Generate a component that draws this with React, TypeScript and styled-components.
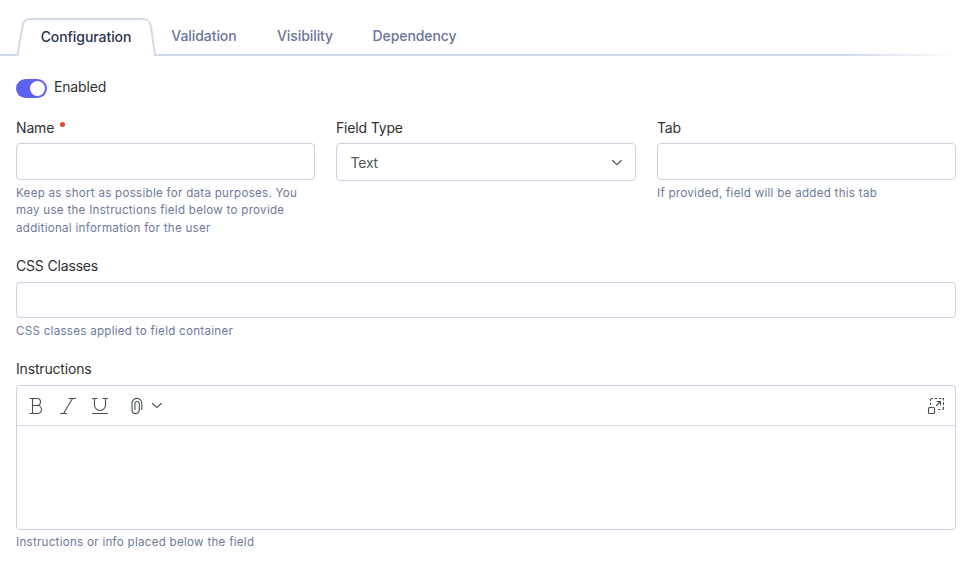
import React from "react";
import styled, { createGlobalStyle } from "styled-components";

const GlobalStyle = createGlobalStyle`
  *, *::before, *::after { box-sizing: border-box; }
  body {
    margin: 0;
    background: #fff;
    font-family: Inter, "Liberation Sans", sans-serif;
    color: #333;
  }
`;

const Page = styled.main`
  width: 974px;
  height: 570px;
  overflow: hidden;
  background: #fff;
`;

const TabBar = styled.nav`
  position: relative;
  display: flex;
  height: 56px;
  padding-left: 17px;
  background: linear-gradient(to right, #d3dbe8 0, #d3dbe8 850px, #fff 960px) left bottom 0px / 100% 2px no-repeat;
`;

const Tab = styled.button<{ $width: number; $active?: boolean }>`
  position: relative;
  width: ${(p) => p.$width}px;
  height: 56px;
  padding: ${(p) => (p.$active ? "18px 0 0" : "16px 0 0")};
  border: 0;
  background: none;
  font: 500 14px/20px Inter, "Liberation Sans", sans-serif;
  letter-spacing: -0.07px;
  text-align: center;
  white-space: nowrap;
  color: ${(p) => (p.$active ? "#2b344f" : "#68769a")};
`;

const TabShape = styled.svg`
  position: absolute;
  left: -1px;
  top: 0;
`;

const TabLabel = styled.span`
  position: relative;
`;

const Form = styled.form`
  padding: 20px 18px 0 16px;
`;

const ToggleRow = styled.div`
  display: flex;
  align-items: center;
  gap: 7px;
  height: 22px;
`;

const Toggle = styled.span`
  display: flex;
  justify-content: flex-end;
  width: 31px;
  height: 19px;
  margin-top: 2px;
  padding: 2px;
  border-radius: 10px;
  background: #5f62ee;
`;

const Knob = styled.span`
  width: 15px;
  height: 15px;
  border-radius: 50%;
  background: #fff;
`;

const Label = styled.label`
  display: flex;
  height: 20px;
  font-size: 14px;
  line-height: 20px;
  letter-spacing: -0.17px;
  color: #2f3133;
`;

const Required = styled.span`
  width: 5px;
  height: 5px;
  margin: 4px 0 0 6px;
  border-radius: 50%;
  background: #e8452c;
`;

const Columns = styled.div`
  display: grid;
  grid-template-columns: 299px 300px 299px;
  column-gap: 21px;
  height: 119px;
  margin-top: 20px;
`;

const Field = styled.div<{ $top?: number }>`
  margin-top: ${(p) => p.$top ?? 0}px;
`;

const Input = styled.input<{ $height: number; $gap: number }>`
  display: block;
  width: 100%;
  height: ${(p) => p.$height}px;
  margin-top: ${(p) => p.$gap}px;
  border: 1px solid #c9d0df;
  border-radius: 4px;
  background: #fff;
`;

const Select = styled.div`
  display: flex;
  align-items: center;
  justify-content: space-between;
  height: 38px;
  margin-top: 5px;
  padding: 1px 12px 0 13.5px;
  border: 1px solid #c9d0df;
  border-radius: 4px;
  font-size: 14px;
  letter-spacing: -0.2px;
  color: #4d5b57;
`;

const Help = styled.p<{ $top?: number; $gap?: number }>`
  height: 18px;
  margin: ${(p) => p.$top ?? 4.6}px 0 0;
  font-size: 11.6px;
  line-height: 17.5px;
  letter-spacing: 0.27px;
  color: #6d7a9b;
`;

const Editor = styled.div`
  height: 145px;
  margin-top: 6px;
  border: 1px solid #c9d0df;
  border-radius: 4px;
`;

const Toolbar = styled.div`
  display: flex;
  align-items: center;
  height: 40px;
  padding: 1px 9px 0 10px;
  border-bottom: 1px solid #d3d9e6;
`;

const Tool = styled.button<{ $width: number; $end?: boolean }>`
  display: flex;
  width: ${(p) => p.$width}px;
  height: 20px;
  margin-left: ${(p) => (p.$end ? "auto" : "0")};
  padding: 0;
  border: 0;
  background: none;
`;

const Icon = styled.svg`
  display: block;
  fill: none;
  stroke: #46504f;
  stroke-width: 1.1;
  stroke-linecap: round;
  stroke-linejoin: round;
`;

const Chevron = () => (
  <Icon width="12" height="8" viewBox="0 0 12 8">
    <path d="M1.5 1.5 5.9 5.7l4.3-4.2" />
  </Icon>
);

export default function App() {
  return (
    <>
      <GlobalStyle />
      <Page>
        <TabBar>
          <Tab $width={138} $active>
            <TabShape width="140" height="56" viewBox="0 0 140 56">
              <path d="M1.5 56 6.4 27C7.5 21 9 19 14 19H127C132 19 134.2 21 135 27L139 56Z" fill="#fff" />
              <path d="M1 55H1.5L6.4 27C7.5 21 9 19 14 19H127C132 19 134.2 21 135 27L139 55H140" fill="none" stroke="#d3dbe8" strokeWidth="2" />
            </TabShape>
            <TabLabel>Configuration</TabLabel>
          </Tab>
          <Tab $width={98}>Validation</Tab>
          <Tab $width={104}>Visibility</Tab>
          <Tab $width={115}>Dependency</Tab>
        </TabBar>
        <Form>
          <ToggleRow>
            <Toggle><Knob /></Toggle>
            <Label>Enabled</Label>
          </ToggleRow>
          <Columns>
            <Field>
              <Label>Name<Required /></Label>
              <Input $height={37} $gap={5} />
              <Help>
                Keep as short as possible for data purposes. You<br />
                may use the Instructions field below to provide<br />
                additional information for the user
              </Help>
            </Field>
            <Field>
              <Label>Field Type</Label>
              <Select>Text<Chevron /></Select>
            </Field>
            <Field>
              <Label>Tab</Label>
              <Input $height={37} $gap={5} />
              <Help>If provided, field will be added this tab</Help>
            </Field>
          </Columns>
          <Field $top={19}>
            <Label>CSS Classes</Label>
            <Input $height={36} $gap={6} />
            <Help $top={5}>CSS classes applied to field container</Help>
          </Field>
          <Field $top={18}>
            <Label>Instructions</Label>
            <Editor>
              <Toolbar>
                <Tool type="button" $width={32}>
                  <Icon width="20" height="20" viewBox="0 0 20 20">
                    <path d="M3 2.5H10a3.5 3.5 0 0 1 0 7H5.5M3 17.5H10.5a4 4 0 0 0 0-8M5.5 2.5v15" />
                  </Icon>
                </Tool>
                <Tool type="button" $width={32}>
                  <Icon width="20" height="20" viewBox="0 0 20 20">
                    <path d="M10 2.5H16.5M1.5 17.5H7.5M13.5 2.5 4.5 17.5" />
                  </Icon>
                </Tool>
                <Tool type="button" $width={38}>
                  <Icon width="20" height="20" viewBox="0 0 20 20">
                    <path d="M1.5 2.5H6M12 2.5h4.5M3.5 2.5V9a5.5 5.5 0 0 0 11 0V2.5M1.5 17.5h15" />
                  </Icon>
                </Tool>
                <Tool type="button" $width={22}>
                  <Icon width="20" height="20" viewBox="0 0 20 20">
                    <path d="M12.8 13.5V7.3a4.9 4.9 0 0 0-9.8 0v6.2c0 5.5 7.3 5.5 7.3 0V8c0-3.4-4.4-3.4-4.4 0v5.5" />
                  </Icon>
                </Tool>
                <Chevron />
                <Tool type="button" $width={20} $end>
                  <Icon width="20" height="20" viewBox="0 0 20 20">
                    <rect x="2.5" y="11.5" width="6" height="6" rx="1" />
                    <path d="M4.5 8.5V7M4.5 4.5V3.5a1 1 0 0 1 1-1h1M9 2.5h2M13.5 2.5h1.5M17 2.5h.5V4M17.5 6.5v2M17.5 11v1.5a1 1 0 0 1-1 1M14 13.5h-1.5M10.5 9.5 14.5 5.5M11 5.5h3.5V9" />
                  </Icon>
                </Tool>
              </Toolbar>
            </Editor>
            <Help $top={4}>Instructions or info placed below the field</Help>
          </Field>
        </Form>
      </Page>
    </>
  );
}
